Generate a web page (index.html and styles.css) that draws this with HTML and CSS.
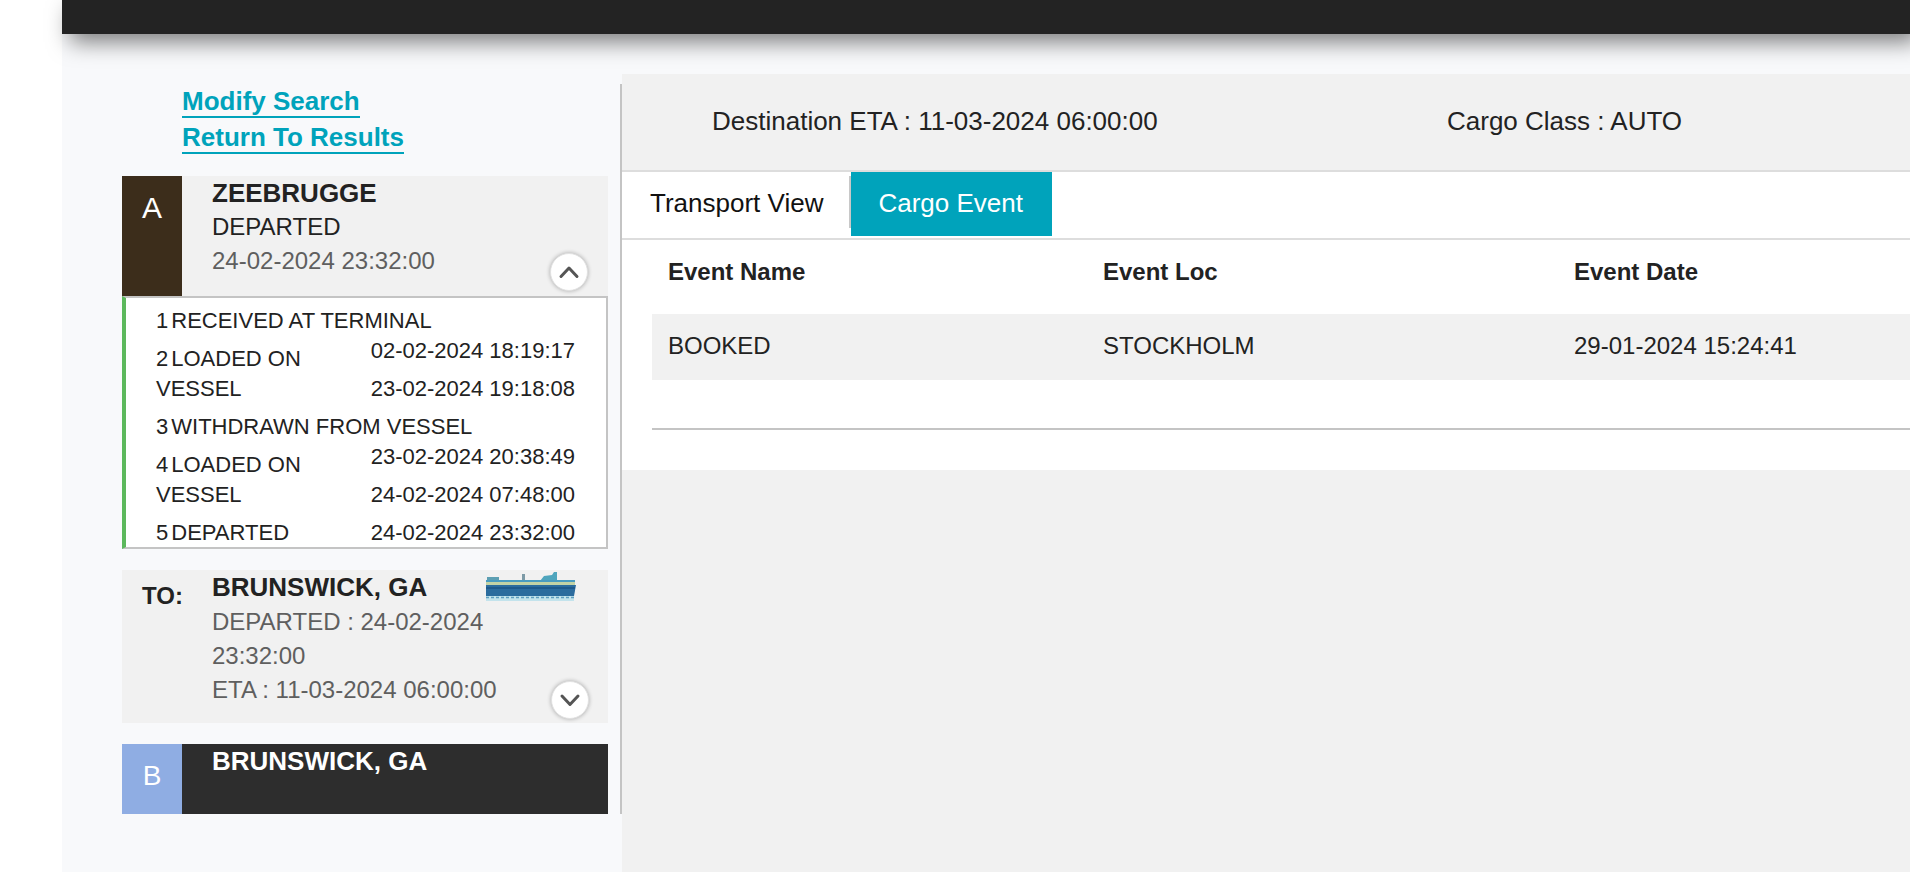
FILE: index.html
```html
<!DOCTYPE html>
<html lang="en">
<head>
<meta charset="utf-8">
<title>Cargo Event</title>
<link rel="stylesheet" href="styles.css">
</head>
<body>
<div class="page">
  <header class="topbar"></header>
  <div class="main">
    <aside class="side">
      <div class="rail">
        <a class="link" href="#">Modify Search</a>
        <a class="link" href="#">Return To Results</a>

        <section class="card card-a">
          <div class="badge badge-a">A</div>
          <div class="card-body">
            <div class="title">ZEEBRUGGE</div>
            <div class="status">DEPARTED</div>
            <div class="muted">24-02-2024 23:32:00</div>
          </div>
          <button class="toggle toggle-a" aria-label="Collapse">
            <svg viewBox="0 0 24 24" width="24" height="24"><path d="M4 16.5 L12 8 L20 16.5" class="chev"/></svg>
          </button>
        </section>

        <ol class="events">
          <li><span class="num">1</span>RECEIVED AT TERMINAL<span class="when">02-02-2024 18:19:17</span></li>
          <li><span class="num">2</span>LOADED ON<br>VESSEL<span class="when">23-02-2024 19:18:08</span></li>
          <li><span class="num">3</span>WITHDRAWN FROM VESSEL<span class="when">23-02-2024 20:38:49</span></li>
          <li><span class="num">4</span>LOADED ON<br>VESSEL<span class="when">24-02-2024 07:48:00</span></li>
          <li><span class="num">5</span>DEPARTED<span class="when">24-02-2024 23:32:00</span></li>
        </ol>

        <section class="card card-to">
          <div class="to-label">TO:</div>
          <div class="card-body to-body">
            <div class="title">BRUNSWICK, GA</div>
            <div class="muted">DEPARTED : 24-02-2024 23:32:00</div>
            <div class="muted">ETA : 11-03-2024 06:00:00</div>
          </div>
          <svg class="ship" viewBox="0 0 90 29" width="90" height="29" aria-hidden="true">
            <g class="ship-art">
              <rect x="1" y="5" width="12" height="4" fill="#5d9fb3"/>
              <rect x="36" y="2" width="3" height="7" fill="#7d9aa6"/>
              <path d="M54 9 L58 4 L66 3 L68 0 L71 0 L71 9 Z" fill="#4fa5bd"/>
              <rect x="0" y="8" width="89" height="2" fill="#4a9cc0"/>
              <rect x="0" y="10" width="89" height="3" fill="#c3d3a6"/>
              <path d="M0 13 H90 L88 24 H0 Z" fill="#2c6c9e"/>
              <rect x="0" y="15" width="89" height="2" fill="#1f5a8c"/>
              <rect x="0" y="24" width="88" height="5" fill="#c3e3ec"/>
              <path d="M0 25.5 H88" stroke="#5f9fc0" stroke-width="1.5" stroke-dasharray="3 2" fill="none"/>
            </g>
          </svg>
          <button class="toggle toggle-to" aria-label="Expand">
            <svg viewBox="0 0 24 24" width="24" height="24"><path d="M4 8 L12 16.5 L20 8" class="chev"/></svg>
          </button>
        </section>

        <section class="card card-b">
          <div class="badge badge-b">B</div>
          <div class="card-body">
            <div class="title">BRUNSWICK, GA</div>
          </div>
        </section>
      </div>
    </aside>

    <main class="content">
      <div class="summary">
        <span class="sum-eta">Destination ETA : 11-03-2024 06:00:00</span>
        <span class="sum-class">Cargo Class : AUTO</span>
      </div>
      <div class="panel">
        <nav class="tabs">
          <a class="tab" href="#">Transport View</a>
          <a class="tab tab-active" href="#">Cargo Event</a>
        </nav>
        <div class="table-wrap">
          <table class="grid">
            <thead>
              <tr><th class="col-name">Event Name</th><th class="col-loc">Event Loc</th><th>Event Date</th></tr>
            </thead>
            <tbody>
              <tr><td>BOOKED</td><td>STOCKHOLM</td><td>29-01-2024 15:24:41</td></tr>
            </tbody>
          </table>
        </div>
      </div>
    </main>
  </div>
</div>
</body>
</html>
```

FILE: styles.css
```css
* { box-sizing: border-box; }
html, body { margin: 0; height: 100%; background: #fff; overflow: hidden; }
body { font-family: "Liberation Sans", Arial, sans-serif; color: #222; }

.page { margin-left: 62px; height: 872px; display: flex; flex-direction: column; background: #f8f9fb; }

.topbar {
  height: 34px;
  flex: none;
  background: #232323;
  box-shadow: 8px 8px 22px rgba(0, 0, 0, 0.5);
  position: relative;
  z-index: 2;
}

.main { flex: 1; display: flex; min-height: 0; }

.side { width: 560px; flex: none; padding-top: 50px; }
.rail {
  height: 730px;
  padding: 0 12px 0 60px;
  border-right: 2px solid #c4c4c4;
}

.link {
  display: block;
  width: fit-content;
  margin: 0 0 2px 60px;
  padding-top: 2px;
  font-size: 26px;
  font-weight: 700;
  line-height: 30px;
  color: #00a3bb;
  text-decoration: none;
  border-bottom: 2px solid #00a3bb;
}

.card { display: flex; position: relative; background: #f1f1f1; }
.card-a { height: 120px; margin-top: 22px; }
.card-to { height: 153px; margin-top: 21px; }
.card-b { height: 70px; margin-top: 21px; background: #2d2d2d; color: #fff; }

.badge {
  width: 60px;
  flex: none;
  text-align: center;
  color: #fff;
  font-size: 28px;
  line-height: 32px;
}
.badge-a { background: #3c2d1b; padding-top: 16px; font-size: 30px; }
.badge-b { background: #8fade3; padding-top: 16px; }

.card-body { padding: 0 0 0 30px; font-size: 24px; line-height: 34px; }
.title { font-size: 26px; font-weight: 700; line-height: 34px; }
.status { color: #222; }
.muted { color: #5f5f5f; }
.to-body { width: 350px; }
.to-body .title { margin-bottom: 1px; }
.to-label { width: 60px; flex: none; padding: 9px 0 0 20px; font-size: 24px; font-weight: 700; line-height: 34px; white-space: nowrap; }

.ship { position: absolute; left: 364px; top: 2px; }
.ship-art { filter: blur(0.6px); }

.toggle {
  position: absolute;
  width: 38px;
  height: 38px;
  padding: 0;
  display: flex;
  align-items: center;
  justify-content: center;
  background: #fff;
  border: 1px solid #e2e2e2;
  border-radius: 50%;
  box-shadow: 0 0 4px rgba(0, 0, 0, 0.3);
}
.toggle-a { left: 428px; top: 77px; }
.toggle-to { left: 429px; top: 111px; }
.chev { fill: none; stroke: #555; stroke-width: 3; stroke-linecap: round; stroke-linejoin: round; }

.events {
  list-style: none;
  margin: 0;
  padding: 4px 31px 0 30px;
  border: 2px solid #c4c4c4;
  border-left: 4px solid #5cb85c;
  background: #fff;
  font-size: 22px;
  line-height: 30px;
  color: #222;
  height: 253px;
}
.events li { padding: 4px 0; }
.events li:last-child { padding-bottom: 0; }
.num { margin-right: 3px; }
.when { float: right; }

.content { flex: 1; min-width: 0; margin-top: 40px; background: #f1f1f1; }
.summary {
  height: 98px;
  display: flex;
  align-items: center;
  padding: 0 0 2px 90px;
  border-bottom: 2px solid #ddd;
  font-size: 26px;
}
.sum-eta { width: 735px; flex: none; }

.panel { background: #fff; height: 298px; }
.tabs { display: flex; height: 68px; border-bottom: 2px solid #ddd; padding-left: 4px; }
.tab {
  height: 64px;
  font-size: 26px;
  line-height: 62px;
  color: #111;
  text-decoration: none;
  padding: 0 28px 0 24px;
}
.tab-active { position: relative; background: #00a3bb; color: #fff; padding: 0 27px; width: 201px; }
.tab-active::before {
  content: "";
  position: absolute;
  left: -2px;
  top: 4px;
  width: 2px;
  height: 52px;
  background: #c8c8c8;
}

.table-wrap { margin-left: 30px; height: 190px; border-bottom: 2px solid #c4c4c4; }
.grid { width: 100%; border-collapse: collapse; table-layout: fixed; font-size: 24px; }
.grid th, .grid td { text-align: left; padding: 0 0 0 16px; }
.grid th { height: 74px; padding-bottom: 10px; font-weight: 700; line-height: 30px; }
.grid td { height: 66px; padding-bottom: 2px; background: #f1f1f1; line-height: 30px; }
.col-name { width: 435px; }
.col-loc { width: 471px; }
```
